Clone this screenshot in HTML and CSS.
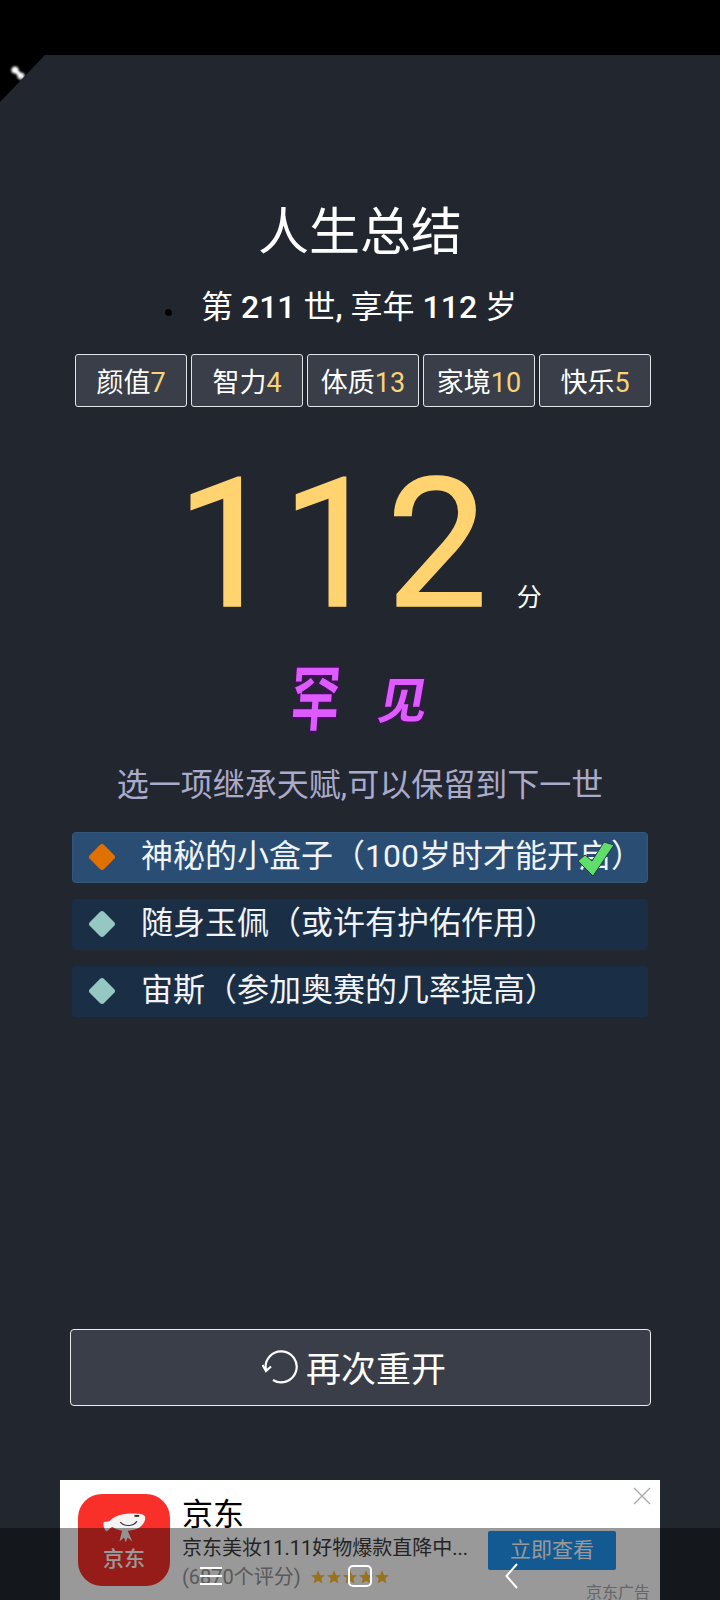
FILE: index.html
```html
<!DOCTYPE html>
<html lang="zh-CN">
<head>
	<meta charset="UTF-8">
	<meta name="viewport" content="width=device-width, initial-scale=1.0">
	<title>人生总结</title>
	<link rel="stylesheet" href="styles.css">
</head>
<body>
	<div class="status-bar"></div>

	<div class="main-container">
		<div class="corner">
			<svg class="corner-pin" width="20" height="20" viewBox="0 0 20 20">
				<circle cx="6" cy="6" r="3.6" fill="#fff"/>
				<circle cx="12" cy="12" r="3.6" fill="#e8e8e8"/>
				<path d="M6 6L12 12" stroke="#fff" stroke-width="4"/>
			</svg>
		</div>

		<h1 class="title">人生总结</h1>
		<ul class="life-info">
			<li><span>第 <b>211</b> 世<b>,</b> 享年 <b>112</b> 岁</span></li>
		</ul>

		<div class="stats">
			<div class="stat">颜值<span class="num">7</span></div>
			<div class="stat">智力<span class="num">4</span></div>
			<div class="stat">体质<span class="num">13</span></div>
			<div class="stat">家境<span class="num">10</span></div>
			<div class="stat">快乐<span class="num">5</span></div>
		</div>

		<div class="score">112<span class="score-unit">分</span></div>

		<div class="rarity">
			<span class="rarity-a">罕</span>
			<span class="rarity-b">见</span>
		</div>

		<div class="hint">选一项继承天赋,可以保留到下一世</div>

		<div class="talents">
			<div class="talent selected">
				<i class="diamond orange"></i><span class="talent-name">神秘的小盒子（100岁时才能开启）</span>
				<svg class="check" width="38" height="38" viewBox="0 0 38 38">
					<path d="M1 20L16 35L37 4L27 1L15 20L8 14Z" fill="#5fdf6a" stroke="#26384a" stroke-width="1"/>
				</svg>
			</div>
			<div class="talent"><i class="diamond"></i><span class="talent-name">随身玉佩（或许有护佑作用）</span></div>
			<div class="talent"><i class="diamond"></i><span class="talent-name">宙斯（参加奥赛的几率提高）</span></div>
		</div>

		<div class="restart">
			<svg width="36" height="36" viewBox="0 0 36 36" fill="none" stroke="#fff" stroke-width="2.2">
				<path d="M4 22A15.500 15.500 0 1 1 11 32"/>
				<path d="M0.5 17L4 23L9 18.500"/>
			</svg>
			再次重开
		</div>
	</div>

	<div class="ad">
		<div class="ad-logo">
			<svg class="ad-fish" width="44" height="31" viewBox="0 0 48 40" preserveAspectRatio="none">
				<path d="M2 13L8 12C13 5 24 1 34 2C41 2 46 3 47 6C48 12 44 20 35 23C26 26 16 24 11 19L5 25C2 22 1 17 2 13Z" fill="#f4f4f4"/>
				<path d="M20 13C25 20 35 18 38 12" fill="none" stroke="#333" stroke-width="1.500"/>
				<ellipse cx="38" cy="5" rx="3" ry="1.500" fill="#333"/>
				<path d="M22 24L28 24L33 38L28 33L26 39L24 33L19 38Z" fill="#f4f4f4"/>
			</svg>
			<span class="ad-logo-text">京东</span>
		</div>
		<div class="ad-text">
			<div class="ad-name">京东</div>
			<div class="ad-desc">京东美妆11.11好物爆款直降中...</div>
			<div class="ad-rating">(6870个评分)
				<span class="stars">
					<svg width="14" height="14" viewBox="0 0 14 14"><path class="star" d="M7 0L9 5L14 5.300L10.200 8.500L11.400 13.500L7 10.800L2.600 13.500L3.800 8.500L0 5.300L5 5Z"/></svg>
					<svg width="14" height="14" viewBox="0 0 14 14"><path class="star" d="M7 0L9 5L14 5.300L10.200 8.500L11.400 13.500L7 10.800L2.600 13.500L3.800 8.500L0 5.300L5 5Z"/></svg>
					<svg width="14" height="14" viewBox="0 0 14 14"><path class="star" d="M7 0L9 5L14 5.300L10.200 8.500L11.400 13.500L7 10.800L2.600 13.500L3.800 8.500L0 5.300L5 5Z"/></svg>
					<svg width="14" height="14" viewBox="0 0 14 14"><path class="star" d="M7 0L9 5L14 5.300L10.200 8.500L11.400 13.500L7 10.800L2.600 13.500L3.800 8.500L0 5.300L5 5Z"/></svg>
					<svg width="14" height="14" viewBox="0 0 14 14"><path class="star" d="M7 0L9 5L14 5.300L10.200 8.500L11.400 13.500L7 10.800L2.600 13.500L3.800 8.500L0 5.300L5 5Z"/></svg>
				</span>
			</div>
		</div>
		<div class="ad-btn">立即查看</div>
		<svg class="ad-close" width="18" height="18" viewBox="0 0 18 18">
			<path d="M1 1L17 17M17 1L1 17" stroke="#aaa" stroke-width="1.400"/>
		</svg>
		<div class="ad-tag">京东广告</div>
	</div>

	<div class="nav-bar">
		<div class="nav-menu"><i></i><i></i><i></i></div>
		<div class="nav-home"></div>
		<svg class="nav-back" width="13" height="26" viewBox="0 0 13 26">
			<path d="M12 1L1.500 13L12 25" fill="none" stroke="#fff" stroke-width="2"/>
		</svg>
	</div>
</body>
</html>
```

FILE: styles.css
```css
html, body{
	margin: 0;
	height: 1600px;
	overflow: hidden;
}
body{
	position: relative;
	display: flex;
	flex-direction: column;
	background-color: rgb(34,39,47);
	font-family: Roboto, "Noto Sans CJK SC", sans-serif;
	color: #fff;
}
.status-bar{
	height: 55px;
	flex: none;
	background-color: #000;
}
.main-container{
	position: relative;
	flex: 1;
	display: flex;
	flex-direction: column;
	padding: 148px 0 74px 0;
	box-sizing: border-box;
}
.corner{
	position: absolute;
	left: 0;
	top: 0;
	width: 45px;
	height: 47px;
	background-color: #000;
	clip-path: polygon(0 0, 100% 0, 0 100%);
}
.corner-pin{
	position: absolute;
	left: 9px;
	top: 9px;
	filter: blur(0.8px);
}
.title{
	margin: 0;
	font-size: 51px;
	font-weight: 400;
	line-height: 60px;
	text-align: center;
}
.life-info{
	margin: 24px 0 0 165px;
	padding: 0;
	list-style: none;
	font-size: 32px;
	line-height: 40px;
}
.life-info li{
	display: flex;
	align-items: center;
	gap: 29px;
}
.life-info li::before{
	content: "";
	width: 7px;
	height: 7px;
	margin-top: 10px;
	border-radius: 50%;
	background-color: #000;
}
.life-info b{
	font-weight: 500;
}
.stats{
	display: flex;
	gap: 4px;
	margin: 27px 0 0 75px;
}
.stat{
	width: 112px;
	height: 53px;
	box-sizing: border-box;
	border: solid 1px rgb(225,228,232);
	border-radius: 3px;
	background-color: rgb(57,62,72);
	font-size: 27px;
	line-height: 56px;
	text-align: center;
}
.num{
	color: rgb(247,211,122);
}
.score{
	display: flex;
	justify-content: center;
	align-items: baseline;
	margin-top: 43px;
	padding-right: 2px;
	font-size: 180px;
	letter-spacing: 4px;
	line-height: 190px;
	color: rgb(255,212,112);
	-webkit-text-stroke: 1.5px rgb(255,212,112);
}
.score-unit{
	margin-left: 25px;
	font-size: 25px;
	letter-spacing: 0;
	line-height: 1;
	color: #fff;
	-webkit-text-stroke: 0;
}
.rarity{
	display: flex;
	justify-content: center;
	align-items: center;
	gap: 38px;
	height: 85px;
	margin-top: 10px;
	font-weight: 900;
	color: rgb(222,92,255);
	-webkit-text-stroke: 1.5px rgb(60,20,80);
}
.rarity-a{
	font-size: 50px;
	transform: scaleY(1.45) skewX(-6deg);
}
.rarity-b{
	font-size: 50px;
	transform: skewX(-10deg);
	margin-top: 8px;
}
.hint{
	margin-top: 27px;
	font-size: 32px;
	line-height: 46px;
	text-align: center;
	color: rgb(170,170,202);
}
.talents{
	display: flex;
	flex-direction: column;
	gap: 16px;
	width: 576px;
	margin: 24px auto 0 auto;
}
.talent{
	position: relative;
	display: flex;
	align-items: center;
	height: 51px;
	padding: 0 0 2px 20px;
	box-sizing: border-box;
	border-radius: 4px;
	background-color: rgb(26,46,69);
	font-size: 32px;
	color: rgb(240,244,248);
}
.talent.selected{
	border: solid 1px rgb(52,88,124);
	padding-left: 19px;
	background-color: rgb(42,77,115);
}
.talent-name{
	margin-bottom: 2px;
	line-height: 44px;
}
.diamond{
	flex: none;
	width: 20px;
	height: 20px;
	margin-right: 29px;
	border-radius: 3px;
	background-color: rgb(149,200,192);
	transform: rotate(45deg);
}
.diamond.orange{
	background-color: rgb(224,112,0);
}
.check{
	position: absolute;
	right: 32px;
	top: 8px;
}
.restart{
	display: flex;
	justify-content: center;
	align-items: center;
	gap: 8px;
	width: 581px;
	height: 77px;
	margin: auto 0 0 70px;
	padding: 0 13px 3px 0;
	box-sizing: border-box;
	border: solid 1px rgb(235,237,240);
	border-radius: 4px;
	background-color: rgb(57,62,72);
	font-size: 35px;
}
.ad{
	position: relative;
	flex: none;
	display: flex;
	align-items: flex-start;
	height: 120px;
	width: 600px;
	margin-left: 60px;
	padding: 14px 0 0 18px;
	box-sizing: border-box;
	background-color: #fff;
	color: #000;
}
.ad-logo{
	flex: none;
	display: flex;
	flex-direction: column;
	align-items: center;
	width: 92px;
	height: 92px;
	padding-top: 18px;
	box-sizing: border-box;
	border-radius: 24px;
	background-color: rgb(249,48,42);
}
.ad-fish{
	display: block;
}
.ad-logo-text{
	margin-top: 3px;
	font-size: 21px;
	line-height: 26px;
	font-weight: 500;
	color: #fff;
}
.ad-text{
	flex: none;
	width: 292px;
	margin: 6px 0 0 12px;
}
.ad-name{
	font-size: 31px;
	line-height: 30px;
}
.ad-desc{
	margin-top: 3px;
	font-size: 20px;
	line-height: 30px;
	color: rgb(60,60,60);
}
.ad-rating{
	display: flex;
	align-items: center;
	gap: 10px;
	font-size: 20px;
	line-height: 28px;
	color: rgb(150,150,150);
}
.stars{
	display: flex;
	gap: 2px;
}
.stars svg{
	display: block;
}
.star{
	fill: rgb(255,190,50);
}
.ad-btn{
	flex: none;
	width: 128px;
	height: 39px;
	margin: 37px 0 0 14px;
	border-radius: 2px;
	background-color: rgb(33,150,243);
	font-size: 21px;
	line-height: 39px;
	text-align: center;
	color: #fff;
}
.ad-close{
	position: absolute;
	right: 9px;
	top: 7px;
}
.ad-tag{
	position: absolute;
	right: 10px;
	top: 106px;
	font-size: 16px;
	line-height: 14px;
	color: rgb(170,170,170);
}
.nav-bar{
	position: absolute;
	left: 0;
	bottom: 0;
	display: flex;
	align-items: center;
	width: 100%;
	height: 72px;
	padding: 24px 0 0 200px;
	box-sizing: border-box;
	background-color: rgba(0,0,0,0.4);
}
.nav-menu{
	display: flex;
	flex-direction: column;
	gap: 6px;
	width: 22px;
}
.nav-menu i{
	display: block;
	height: 2px;
	background-color: #fff;
}
.nav-home{
	width: 24px;
	height: 22px;
	margin-left: 126px;
	box-sizing: border-box;
	border: solid 2px #fff;
	border-radius: 5px;
}
.nav-back{
	margin-left: 133px;
}
```
